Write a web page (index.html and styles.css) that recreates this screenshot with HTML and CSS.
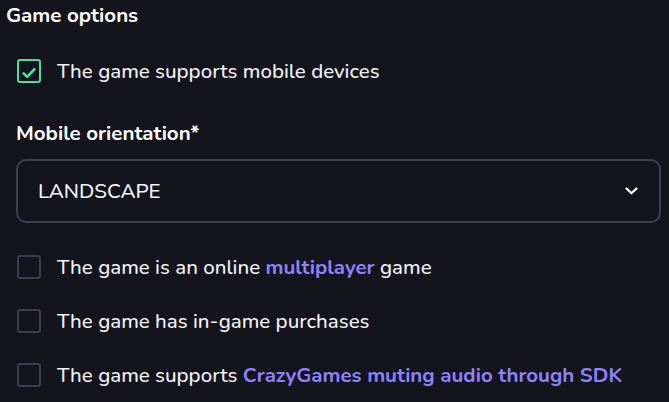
FILE: index.html
```html
<!DOCTYPE html>
<html>
<head>
<meta charset="utf-8">
<link rel="stylesheet" href="styles.css">
</head>
<body>
<div class="page">
  <h2 class="title">Game options</h2>
  <label class="check-row first">
    <span class="box checked">
      <svg width="20" height="20" viewBox="0 0 20 20"><path d="M4.6 12.4 L8.2 15.9 L15.4 8.3" fill="none" stroke="#45e0a2" stroke-width="2.7" stroke-linecap="round" stroke-linejoin="round"/></svg>
    </span>
    <span class="label">The game supports mobile devices</span>
  </label>
  <div class="field-label">Mobile orientation*</div>
  <div class="select">
    <span class="select-value">LANDSCAPE</span>
    <svg class="chevron" width="13" height="8" viewBox="0 0 13 8"><path d="M1.5 1.5 L6.5 6.3 L11.5 1.5" fill="none" stroke="#ffffff" stroke-width="2.2" stroke-linecap="round" stroke-linejoin="round"/></svg>
  </div>
  <div class="checks">
    <label class="check-row">
      <span class="box"></span>
      <span class="label">The game is an online <a class="link">multiplayer</a> game</span>
    </label>
    <label class="check-row">
      <span class="box"></span>
      <span class="label">The game has in-game purchases</span>
    </label>
    <label class="check-row">
      <span class="box"></span>
      <span class="label">The game supports <a class="link">CrazyGames muting audio through SDK</a></span>
    </label>
  </div>
</div>
</body>
</html>
```

FILE: styles.css
```css
html, body {
  margin: 0;
  padding: 0;
  background: #14141c;
}
body {
  font-family: "Nunito", "Open Sans", "Noto Sans", sans-serif;
  color: #f2f2f7;
  width: 669px;
  height: 402px;
  overflow: hidden;
}
.page {
  padding: 0 8px 0 6px;
}
.title {
  margin: 0;
  padding-top: 3px;
  font-size: 20.5px;
  font-weight: 700;
  line-height: 24px;
  color: #ffffff;
}
.check-row {
  display: flex;
  align-items: center;
  gap: 16px;
  height: 24px;
  padding-left: 11px;
}
.check-row.first {
  margin-top: 32px;
}
.box {
  width: 24px;
  height: 24px;
  box-sizing: border-box;
  border: 2px solid #3b3d52;
  border-radius: 3px;
  display: flex;
  align-items: center;
  justify-content: center;
  flex: none;
}
.box.checked {
  border-color: #45e0a2;
}
.box svg {
  display: block;
}
.label {
  font-size: 20.5px;
  font-weight: 500;
  line-height: 24px;
  color: #f2f2f7;
  white-space: nowrap;
}
.link {
  color: #8f82ff;
  font-weight: 700;
}
.field-label {
  margin-top: 38px;
  padding-left: 10px;
  font-size: 20.5px;
  font-weight: 700;
  line-height: 24px;
  color: #ffffff;
}
.select {
  margin: 14px 0 0 10px;
  height: 64px;
  box-sizing: border-box;
  border: 2px solid #3f4058;
  border-radius: 10px;
  display: flex;
  align-items: center;
  justify-content: space-between;
  padding: 0 21px 0 20px;
}
.select-value {
  font-size: 20.5px;
  font-weight: 500;
  line-height: 24px;
  color: #f2f2f7;
}
.chevron {
  display: block;
}
.checks {
  margin-top: 32px;
  display: flex;
  flex-direction: column;
  gap: 30px;
}
```
